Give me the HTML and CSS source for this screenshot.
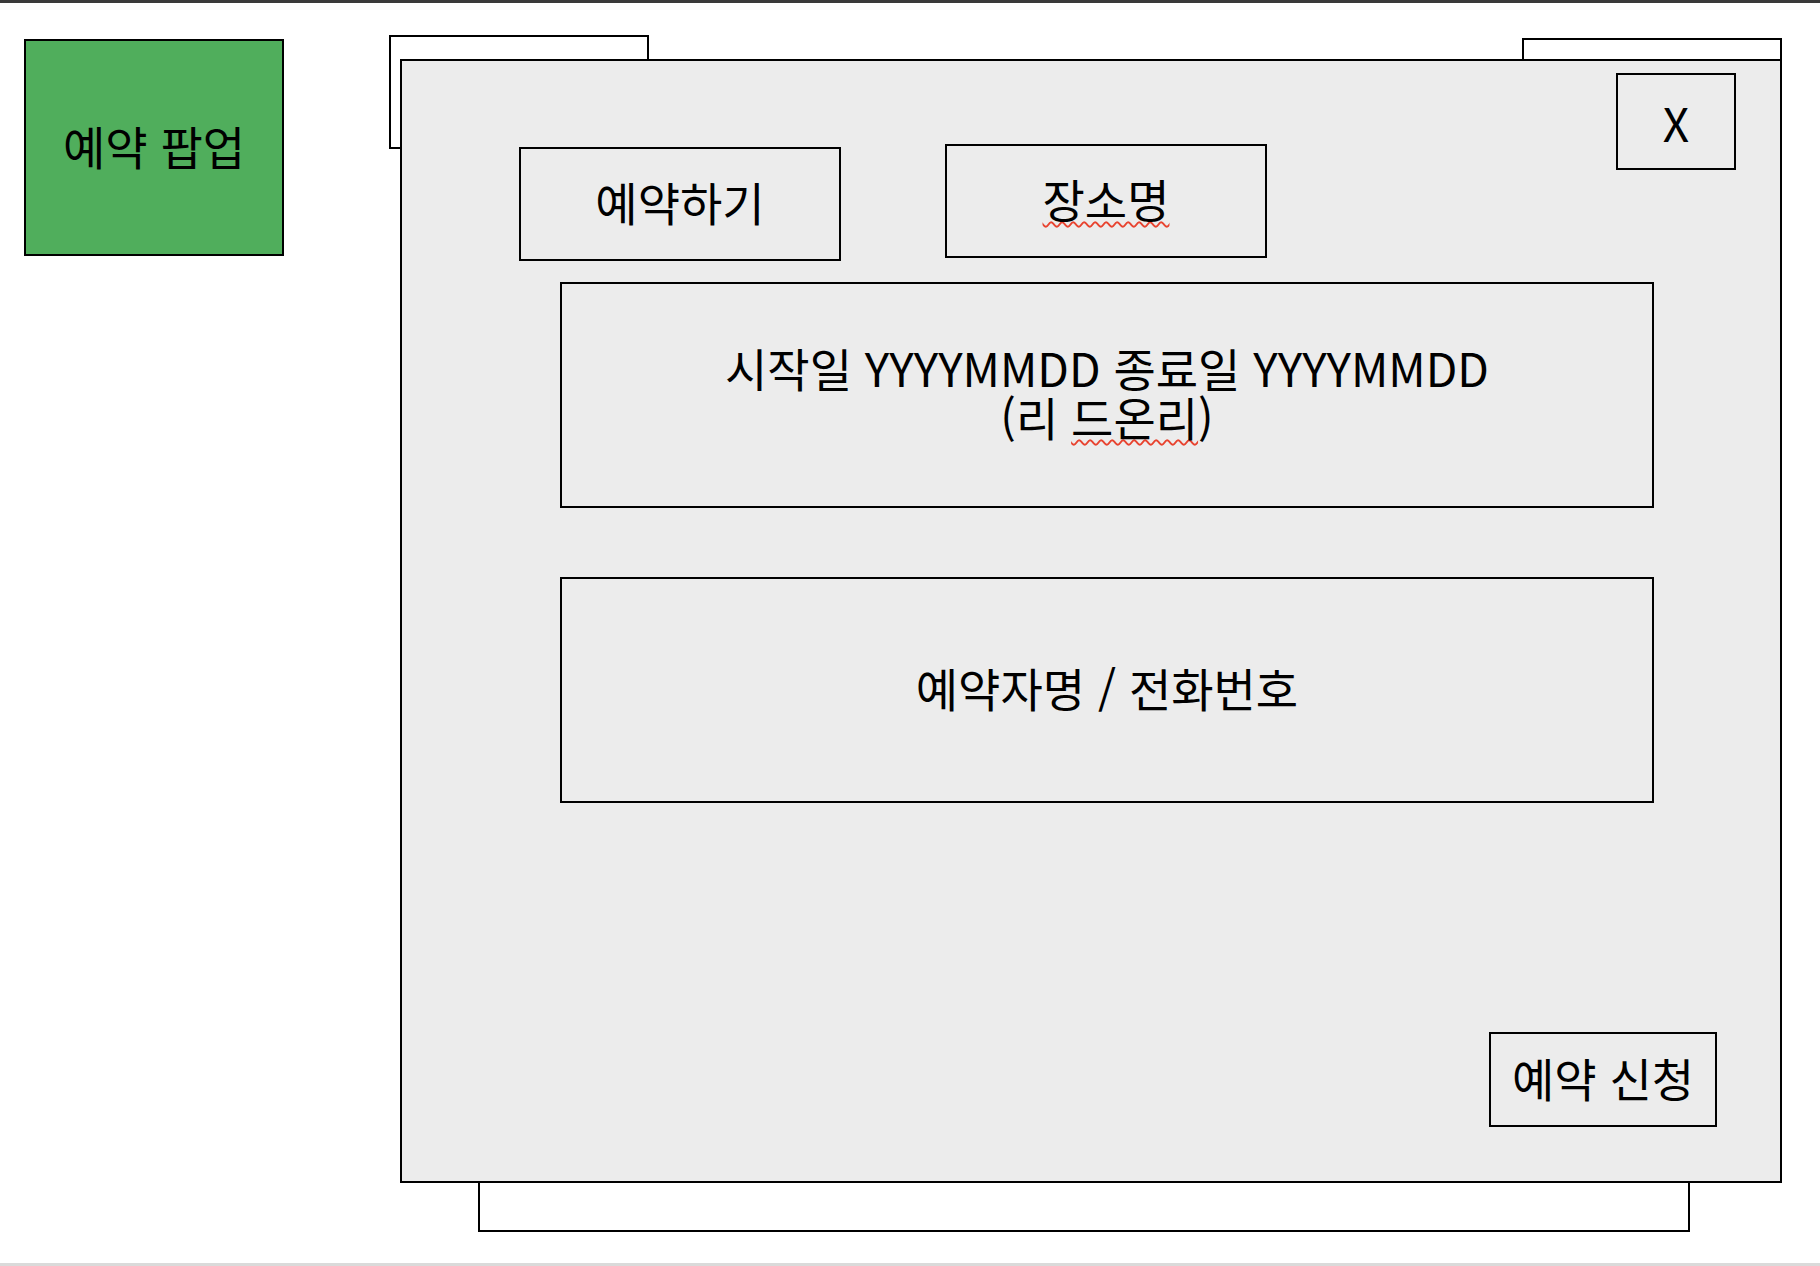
FILE: index.html
```html
<!DOCTYPE html>
<html lang="ko">
<head>
    <meta charset="UTF-8">
    <meta name="viewport" content="width=device-width, initial-scale=1.0">
    <title>예약 팝업</title>
    <link rel="stylesheet" href="styles.css">
</head>
<body>
    <div class="topbar"></div>
    <main class="board">
        <div class="note">예약 팝업</div>
        <div class="sheet-stack">
            <div class="ghost ghost-tl"></div>
            <div class="ghost ghost-tr"></div>
            <div class="ghost ghost-bottom"></div>
            <section class="popup">
                <button type="button" class="box close">X</button>
                <div class="tabs">
                    <div class="box tab tab-reserve">예약하기</div>
                    <div class="box tab tab-place"><span class="typo">장소명</span></div>
                </div>
                <div class="box field">
                    <p>시작일 YYYYMMDD 종료일 YYYYMMDD<br>(리 <span class="typo">드온리</span>)</p>
                </div>
                <div class="box field">
                    <p>예약자명 / 전화번호</p>
                </div>
                <button type="button" class="box submit">예약 신청</button>
            </section>
        </div>
    </main>
    <div class="bottombar"></div>
</body>
</html>
```

FILE: styles.css
```css
* {
    box-sizing: border-box;
}
body {
    margin: 0;
    height: 1266px;
    overflow: hidden;
    background: #fff;
    color: #000;
    font-family: "Noto Sans CJK KR", "Liberation Sans", sans-serif;
    font-size: 46px;
}
.topbar {
    height: 3px;
    background: #3a3a3a;
}
.bottombar {
    height: 3px;
    background: #dadada;
}
.board {
    height: 1260px;
    display: flex;
    align-items: flex-start;
}
.note {
    margin: 36px 0 0 24px;
    width: 260px;
    height: 217px;
    padding-bottom: 6px;
    background: #50ae5c;
    border: 2px solid #000;
    display: flex;
    align-items: center;
    justify-content: center;
}
.sheet-stack {
    position: relative;
    margin: 56px 0 0 116px;
    width: 1382px;
    height: 1124px;
}
.ghost {
    position: absolute;
    background: #fff;
    border: 2px solid #000;
}
.ghost-tl {
    left: -11px;
    top: -24px;
    width: 260px;
    height: 114px;
}
.ghost-tr {
    left: 1122px;
    top: -21px;
    width: 260px;
    height: 60px;
}
.ghost-bottom {
    left: 78px;
    top: 1000px;
    width: 1212px;
    height: 173px;
}
.popup {
    position: relative;
    z-index: 1;
    height: 100%;
    background: #ececec;
    border: 2px solid #000;
    display: flex;
    flex-direction: column;
    align-items: flex-start;
}
.box {
    border: 2px solid #000;
    background: #ececec;
    display: flex;
    align-items: center;
    justify-content: center;
    text-align: center;
    font: inherit;
    color: inherit;
    padding: 0 0 6px;
}
.box p {
    margin: 0;
}
.close {
    position: absolute;
    top: 12px;
    right: 44px;
    width: 120px;
    height: 97px;
    padding: 0;
}
.tabs {
    margin: 83px 0 0 117px;
    display: flex;
    align-items: flex-start;
    gap: 104px;
}
.tab {
    width: 322px;
    height: 114px;
}
.tab-reserve {
    margin-top: 3px;
}
.field {
    margin: 21px 0 0 158px;
    width: 1094px;
    height: 226px;
    line-height: 49px;
}
.field + .field {
    margin-top: 69px;
}
.submit {
    align-self: flex-end;
    margin: 229px 63px 0 0;
    width: 228px;
    height: 95px;
}
.typo {
    text-decoration: underline wavy #e8432f;
    text-decoration-thickness: 1.5px;
    text-underline-offset: 3px;
}
```
